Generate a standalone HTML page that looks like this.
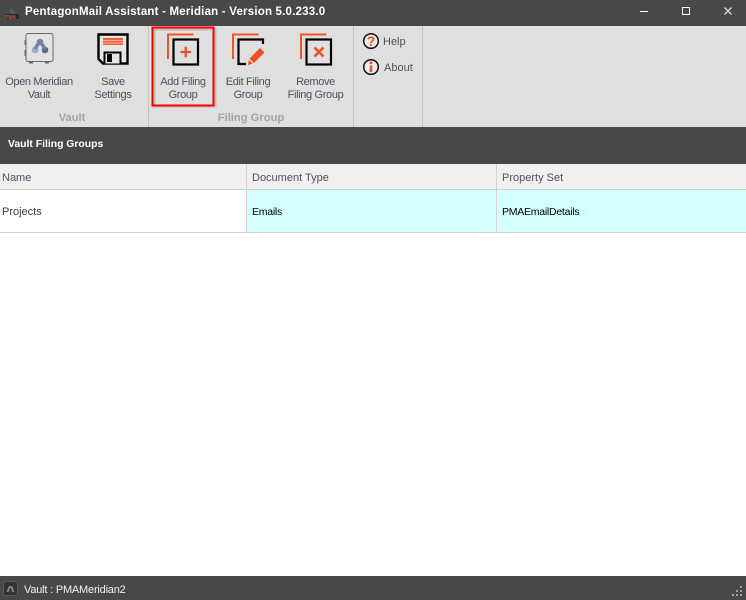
<!DOCTYPE html>
<html><head><meta charset="utf-8"><style>
html,body{margin:0;padding:0;width:746px;height:600px;overflow:hidden;background:#fff}
body{position:relative;font-family:"Liberation Sans",sans-serif;font-size:11px;color:#4a4a5a}
.a{position:absolute;white-space:nowrap}
.c{position:absolute;text-align:center;line-height:13px;transform:translateX(-50%);white-space:nowrap;color:#4f4f5f;font-size:11px;letter-spacing:-.35px}
svg{position:absolute;left:0;top:0}
</style></head><body>
<div class="a" style="left:0;top:0;width:746px;height:26px;background:#484848"></div>
<div class="a" style="left:0;top:26px;width:746px;height:101px;background:#dfdfdf"></div>
<div class="a" style="left:0;top:127px;width:746px;height:37px;background:#484848"></div>
<div class="a" style="left:0;top:164px;width:746px;height:26px;background:#f0f0f0"></div>
<div class="a" style="left:247px;top:190px;width:499px;height:42px;background:#d4ffff"></div>
<div class="a" style="left:0;top:576px;width:746px;height:24px;background:#484848"></div>

<svg width="746" height="600" viewBox="0 0 746 600" fill="none">
<path d="M148.5 26V127M353.5 26V127M422.5 26V127" stroke="#c4c4c4"/>
<path d="M0 189.5H746M0 232.5H746M246.5 164V232M496.5 164V232" stroke="#d2d2d2"/>
<!-- app icon -->
<path d="M9 10l3-2 3 5-3 1z" fill="#3f5f80"/>
<rect x="5" y="14" width="14" height="5" fill="#2a2a2a"/>
<!-- window controls -->
<path d="M640 11.500H648" stroke="#fff" stroke-width="1"/>
<rect x="682.500" y="7.500" width="7" height="7" stroke="#fff" stroke-width="1"/>
<path d="M724.500 7.500l7 7M731.500 7.500l-7 7" stroke="#ddd" stroke-width="1.300"/>
<!-- vault icon -->
<rect x="26" y="33.500" width="27" height="28" rx="2" fill="#e2e2e2" stroke="#6a6a6a" stroke-width="1"/>
<path d="M25.500 40v5M25.500 50v6" stroke="#6a6a6a" stroke-width="2"/>
<path d="M29 62.500h4M45 62.500h4" stroke="#6a6a6a" stroke-width="2"/>
<circle cx="40" cy="42" r="3.300" fill="#7183a8"/>
<circle cx="35" cy="50" r="3.300" fill="#a0adc4"/>
<circle cx="45" cy="50" r="3.300" fill="#5b6f95"/>
<path d="M38 44l-3 5M42 44l3 5" stroke="#6f80a4" stroke-width="3.500"/>
<!-- save icon -->
<path d="M98.500 34.500H127.500V63.500H103L98.500 59Z" fill="#e6e6e6" stroke="#000" stroke-width="2.400"/>
<rect x="103" y="38" width="20" height="7" fill="#f0603a"/>
<path d="M103 40.500H123M103 43H123" stroke="#f0b0a0" stroke-width="1"/>
<path d="M104.500 63.500V52.500H120.500V63.500" fill="#e6e6e6" stroke="#000" stroke-width="2"/>
<rect x="107" y="54" width="5" height="8" fill="#000"/>
<!-- add -->
<path d="M168 59V34.500H193.500" stroke="#f0532a" stroke-width="2"/>
<rect x="173.500" y="39.500" width="24.500" height="25" fill="#dfdfdf" stroke="#000" stroke-width="2.200"/>
<path d="M180.500 52H191M185.700 46.700V57.300" stroke="#ee4f23" stroke-width="2.300"/>
<!-- edit -->
<path d="M233 59V34.500H258.500" stroke="#f0532a" stroke-width="2"/>
<path d="M246 64H238.500V39.500H263V44" stroke="#000" stroke-width="2.200"/>
<path d="M260 48L264.500 52.500L254 63L249.500 58.500ZM249 60L252.500 63.500L247.800 65Z" fill="#ee4f23"/>
<!-- remove -->
<path d="M301 59V34.500H326.500" stroke="#f0532a" stroke-width="2"/>
<rect x="306.500" y="39.500" width="24.500" height="25" fill="#dfdfdf" stroke="#000" stroke-width="2.200"/>
<path d="M314.500 47.500L323.500 56.500M323.500 47.500L314.500 56.500" stroke="#ee4f23" stroke-width="2.600"/>
<!-- help -->
<circle cx="371" cy="41" r="7.300" fill="#ececec" stroke="#111" stroke-width="1.500"/>
<!-- about -->
<circle cx="371" cy="67" r="7.300" fill="#ececec" stroke="#111" stroke-width="1.500"/>
<path d="M371 65.500V72" stroke="#e8502a" stroke-width="2.600"/>
<path d="M371 61.500V64" stroke="#e8502a" stroke-width="2.600"/>
<!-- red highlight -->
<rect x="154" y="29" width="61" height="77" fill="none" stroke="#9a9a9a" stroke-width="3" opacity=".45"/>
<rect x="152.500" y="27.500" width="61" height="78" stroke="#f00" stroke-width="2"/>
<!-- status icon -->
<rect x="3.500" y="581.500" width="14" height="14" rx="2" fill="#333" stroke="#5a5a5a"/>
<path d="M7.500 592l2-5h2l2 5" stroke="#8a8a9a" stroke-width="1.800"/>
<!-- grip -->
<path d="M740 586h2v2h-2zM736 590h2v2h-2zM740 590h2v2h-2zM732 594h2v2h-2zM736 594h2v2h-2zM740 594h2v2h-2z" fill="#a0a0a0"/>
</svg>

<div class="a" style="left:366px;top:33px;width:10px;text-align:center;font:bold 14px/16px 'Liberation Sans',sans-serif;color:#e8502a">?</div>
<div class="a" style="left:5px;top:15px;font:bold 5px/6px 'Liberation Sans',sans-serif;color:#e04a28">PMA</div>

<div class="a" style="left:25px;top:5px;font:bold 11.500px/14px 'Liberation Sans',sans-serif;color:#fff;letter-spacing:.2px">PentagonMail Assistant - Meridian - Version 5.0.233.0</div>

<div class="c" style="left:39px;top:76px">Open Meridian<br>Vault</div>
<div class="c" style="left:113px;top:76px">Save<br>Settings</div>
<div class="c" style="left:183px;top:76px">Add Filing<br>Group</div>
<div class="c" style="left:248px;top:76px">Edit Filing<br>Group</div>
<div class="c" style="left:315.500px;top:76px">Remove<br>Filing Group</div>
<div class="a" style="left:383px;top:35px;line-height:14px;color:#4f4f5f;font-size:11px">Help</div>
<div class="a" style="left:384px;top:61px;line-height:14px;color:#4f4f5f;font-size:11px">About</div>
<div class="c" style="left:72px;top:111px;font-weight:bold;color:#a3a3a3;font-size:11.200px;line-height:14px;letter-spacing:0">Vault</div>
<div class="c" style="left:251px;top:111px;font-weight:bold;color:#a3a3a3;font-size:11.200px;line-height:14px;letter-spacing:0">Filing Group</div>

<div class="a" style="left:8px;top:138px;font:bold 10.400px/14px 'Liberation Sans',sans-serif;color:#fff">Vault Filing Groups</div>
<div class="a" style="left:2px;top:171px;line-height:14px;color:#505060">Name</div>
<div class="a" style="left:252px;top:171px;line-height:14px;color:#505060;font-size:11px">Document Type</div>
<div class="a" style="left:502px;top:171px;line-height:14px;color:#505060;font-size:11px">Property Set</div>
<div class="a" style="left:2px;top:205px;line-height:14px;color:#3a3a4a;font-size:11px">Projects</div>
<div class="a" style="left:252px;top:205px;line-height:14px;color:#000;font-size:10.500px;letter-spacing:-.25px">Emails</div>
<div class="a" style="left:502px;top:205px;line-height:14px;color:#000;font-size:10.500px;letter-spacing:-.25px">PMAEmailDetails</div>
<div class="a" style="left:24px;top:583px;line-height:14px;color:#f0f0f0;font-size:11px;letter-spacing:-.2px">Vault : PMAMeridian2</div>
</body></html>
